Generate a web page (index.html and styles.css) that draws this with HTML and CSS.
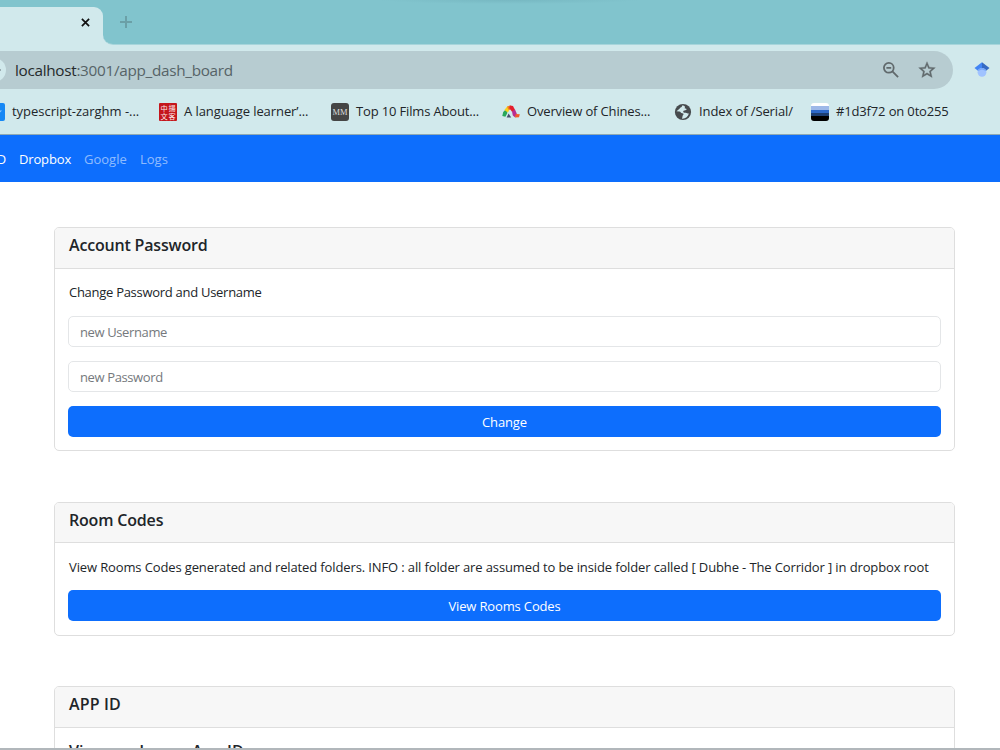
FILE: index.html
```html
<!DOCTYPE html>
<html lang="en">
<head>
    <meta charset="UTF-8">
    <title>App Dashboard</title>
    <link rel="stylesheet" href="styles.css">
</head>
<body>
<div class="browser">
    <div class="tab-strip">
        <div class="tab">
            <svg class="tab-close" viewBox="0 0 10 10"><path d="M1 1l8 8M9 1l-8 8"/></svg>
        </div>
        <div class="strip-rest">
            <svg class="new-tab" viewBox="0 0 12 12"><path d="M6 0v12M0 6h12"/></svg>
        </div>
    </div>
    <div class="toolbar">
        <div class="address-bar">
            <span class="site-info"></span>
            <div class="url"><span class="host">localhost</span>:3001/app_dash_board</div>
            <svg class="zoom-icon" viewBox="0 0 16 16"><circle cx="5.8" cy="5.8" r="4.9"/><path d="M9.4 9.4l5.7 5.7M3.4 5.8h4.8"/></svg>
            <svg class="star-icon" viewBox="0 0 24 24"><path d="M22 9.24l-7.19-.62L12 2 9.19 8.63 2 9.24l5.46 4.73L5.82 21 12 17.27 18.18 21l-1.63-7.03L22 9.24zM12 15.4l-3.76 2.27 1-4.28-3.32-2.88 4.38-.38L12 6.1l1.71 4.04 4.38.38-3.32 2.88 1 4.28L12 15.4z"/></svg>
        </div>
        <svg class="scholar-icon" viewBox="0 0 16 16">
            <path fill="#4285f4" d="M0.5 6L8 0.3V12z"/>
            <path fill="#356ac3" d="M15.5 6L8 0.3V12z"/>
            <circle cx="8" cy="10.3" r="4.4" fill="#a0c3ff"/>
            <path fill="#76a7fa" d="M3.8 9a4.5 4.5 0 0 1 8.4 0L8 7.6z"/>
        </svg>
    </div>
    <div class="bookmarks">
        <a class="bookmark bm-typescript">
            <svg viewBox="0 0 18 18"><rect width="18" height="18" rx="2" fill="#1688f5"/><path d="M9 7.5h6l-3 3z" fill="#8cc7ff"/></svg>
            <span>typescript-zarghm -...</span>
        </a>
        <a class="bookmark bm-language">
            <svg viewBox="0 0 18 18">
                <rect width="18" height="18" rx="1" fill="#c4161c"/>
                <g class="hanzi"><text x="1.4" y="8">中</text><text x="9.4" y="8">揚</text><text x="1.4" y="16">文</text><text x="9.4" y="16">客</text></g>
            </svg>
            <span>A language learner’...</span>
        </a>
        <a class="bookmark bm-films">
            <svg viewBox="0 0 18 18"><rect width="18" height="18" rx="3" fill="#454545"/><text class="mm" x="9" y="12.2" textLength="15" lengthAdjust="spacingAndGlyphs">MM</text></svg>
            <span>Top 10 Films About...</span>
        </a>
        <a class="bookmark bm-chinese">
            <svg viewBox="0 0 18 18">
                <path fill="#28a85b" d="M0.3 13L1.2 9l3-3 1.2 4-2 3.8z"/>
                <path fill="#f6d21f" d="M2.4 7l3-3.8 3.4.8L6 9.5z"/>
                <path fill="#f47b20" d="M5.2 3.4L8 2.4l2 .8-2 3.8-2-.8z"/>
                <path fill="#e41f2d" d="M8 2.6l3 .3 2.2 4.3-3 1.8L7.2 5z"/>
                <path fill="#b92c91" d="M10 8.2l3-1.6 1.8 4.2-1.6 3.6-2.4-2z"/>
                <path fill="#f15a29" d="M13 14.5l.8-3.4 4 .1-.8 3z"/>
                <path fill="#46506a" d="M4.6 14.4l2-4 2.6 4z"/>
            </svg>
            <span>Overview of Chines...</span>
        </a>
        <a class="bookmark bm-index">
            <svg viewBox="0 0 18 18">
                <circle cx="9" cy="9" r="8.1" fill="#474b4e"/>
                <path fill="#d1e9ec" d="M8.8 2.3c-1.2.6-.6 2-2 2.2-1.2.2-1 1.6-2.2 2L2.5 8.3l2.9.2c1.5.1 1.2 1.7 2.8 1.7 1.5 0 1.8 1.2.5 2.3l-.7 3.2c3.6.2 6-2.1 6.900-5.1-1.3.2-2-1-3.5-.8-1.3.1-2.3-.2-2.2-1.3.1-1.3 2-.7 3.2-1.700.8-.8-.6-1.5-1.8-1.6.6-1.1 1-1.6-1.800-2.900z"/>
            </svg>
            <span>Index of /Serial/</span>
        </a>
        <a class="bookmark bm-color">
            <span class="stripes"></span>
            <span>#1d3f72 on 0to255</span>
        </a>
    </div>
</div>

<nav class="navbar">
    <a class="nav-link active nav-cut">APP ID</a>
    <a class="nav-link active nav-dropbox">Dropbox</a>
    <a class="nav-link nav-google">Google</a>
    <a class="nav-link nav-logs">Logs</a>
</nav>

<main class="container">
    <section class="card">
        <div class="card-header"><h5>Account Password</h5></div>
        <div class="card-body">
            <p class="text-account">Change Password and Username</p>
            <input class="form-control" type="text" placeholder="new Username">
            <input class="form-control" type="password" placeholder="new Password">
            <button class="btn">Change</button>
        </div>
    </section>
    <section class="card">
        <div class="card-header"><h5>Room Codes</h5></div>
        <div class="card-body">
            <p class="text-rooms">View Rooms Codes generated and related folders. INFO : all folder are assumed to be inside folder called [ Dubhe - The Corridor ] in dropbox root</p>
            <button class="btn">View Rooms Codes</button>
        </div>
    </section>
    <section class="card">
        <div class="card-header"><h5 class="title-app">APP ID</h5></div>
        <div class="card-body">
            <h6>View or change App ID</h6>
        </div>
    </section>
</main>
<div class="window-edge"></div>
</body>
</html>
```
FILE: styles.css
```css
* {
    box-sizing: border-box;
}
body {
    margin: 0;
    height: 750px;
    display: flex;
    flex-direction: column;
    overflow: hidden;
    background-color: #fff;
    color: #212529;
    font-family: "Open Sans", "Noto Sans", sans-serif;
    font-size: 13px;
    letter-spacing: -0.15px;
}
svg {
    display: block;
    flex: none;
}

/* browser window */
.browser {
    flex: none;
    height: 135px;
    background-color: #d1e9ec;
    border-bottom: 1px solid #8fa9b3;
}
.tab-strip {
    display: flex;
    height: 45px;
    background: linear-gradient(#d1e9ec, #d1e9ec) 0 100% / 120px 20px no-repeat, #81c4cd;
}
.tab {
    width: 103px;
    margin-top: 7px;
    padding: 11px 0 0 81px;
    background-color: #d1e9ec;
    border-top-right-radius: 9px;
}
.tab-close {
    width: 9px;
    height: 9px;
    stroke: #111;
    stroke-width: 1.9;
}
.strip-rest {
    flex: 1;
    padding: 16px 0 0 17px;
    background: radial-gradient(ellipse 130px 4px at 407px 0, #77b8c2, #81c4cd);
    border-bottom: 1px solid #a7d5db;
    border-bottom-left-radius: 10px;
}
.new-tab {
    width: 12px;
    height: 12px;
    stroke: #6ba0a7;
    stroke-width: 2;
}
.toolbar {
    display: flex;
    align-items: center;
    height: 50px;
    gap: 21px;
}
.address-bar {
    display: flex;
    align-items: center;
    width: 953px;
    height: 38px;
    background-color: #b7ccd1;
    border-radius: 0 19px 19px 0;
}
.site-info {
    width: 24px;
    height: 24px;
    margin: 0 9px 0 -18px;
    background: linear-gradient(#9aabb0, #9aabb0) 18px 50% / 1px 2px no-repeat, #d1e9ec;
    border-radius: 50%;
}
.url {
    flex: 1;
    color: #566367;
    font-size: 15.3px;
    letter-spacing: -0.3px;
}
.host {
    color: #25292b;
}
.zoom-icon {
    width: 16px;
    height: 16px;
    margin-right: 18px;
    fill: none;
    stroke: #60696c;
    stroke-width: 1.8;
}
.star-icon {
    width: 20px;
    height: 20px;
    margin-right: 16.5px;
    fill: #60696c;
    stroke: #60696c;
    stroke-width: 0.4;
}
.scholar-icon {
    width: 16px;
    height: 16px;
}
.bookmarks {
    display: flex;
    height: 33px;
    align-items: center;
}
.bookmark {
    display: flex;
    flex: none;
    align-items: center;
    gap: 7px;
    line-height: 18px;
    white-space: nowrap;
}
.bookmark span:last-child {
    padding-bottom: 2px;
}
.bookmark svg {
    width: 18px;
    height: 18px;
}
.bm-typescript {
    width: 172px;
    margin-left: -13px;
    letter-spacing: -0.02px;
}
.bm-language {
    width: 172px;
    letter-spacing: -0.08px;
}
.bm-films {
    width: 171px;
}
.bm-chinese {
    width: 172px;
}
.bm-index {
    width: 137px;
    letter-spacing: -0.1px;
}
.hanzi {
    fill: #fbe8e8;
    font: 7.2px "Noto Sans CJK TC", sans-serif;
    letter-spacing: 0;
}
.mm {
    fill: #ddd;
    font: 9px "Liberation Serif", serif;
    letter-spacing: 0;
    text-anchor: middle;
}
.stripes {
    width: 18px;
    height: 18px;
    border-radius: 3px;
    background: linear-gradient(#fff 0 3px, #9db8e8 3px 7px, #2d69c9 7px 10px, #1d3f72 10px 13px, #000 13px);
}

/* page */
.navbar {
    display: flex;
    flex: none;
    align-items: center;
    height: 47px;
    background-color: #0d6efd;
}
.nav-link {
    flex: none;
    color: rgba(255, 255, 255, 0.55);
}
.nav-link.active {
    color: #fff;
}
.nav-cut {
    display: flex;
    justify-content: flex-end;
    width: 6px;
    margin-right: 13px;
    white-space: nowrap;
}
.nav-dropbox {
    width: 65px;
}
.nav-google {
    width: 56px;
    letter-spacing: 0;
}
.nav-logs {
    letter-spacing: 0;
}
.container {
    flex: 1;
    min-height: 0;
    padding: 45.4px 45px 0 54px;
    overflow: hidden;
}
.card {
    margin-bottom: 50.4px;
    border: 1px solid #dedede;
    border-radius: 5px;
}
.card-header {
    height: 40.6px;
    padding: 6px 14px;
    background-color: #f7f7f7;
    border-bottom: 1px solid #dedede;
    border-radius: 4px 4px 0 0;
}
h5 {
    margin: 0;
    font-size: 16px;
    font-weight: 600;
    line-height: 22px;
    letter-spacing: -0.18px;
}
.title-app {
    letter-spacing: 0.15px;
}
h6 {
    margin: 0 0 0 1px;
    font-size: 16px;
    font-weight: 600;
    line-height: 20px;
    letter-spacing: 0.1px;
}
.card-body {
    padding: 13.3px 13px;
}
.card-body p {
    margin: 0 0 12px 1px;
    line-height: 21.4px;
    white-space: nowrap;
}
.text-account {
    letter-spacing: -0.28px;
}
.text-rooms {
    letter-spacing: -0.125px;
}
.form-control {
    display: block;
    width: 100%;
    height: 31.4px;
    margin-bottom: 13.6px;
    padding: 1px 11px 0;
    border: 1px solid #e4e6e8;
    border-radius: 5px;
    font: inherit;
    letter-spacing: -0.38px;
}
.form-control::placeholder {
    color: #75797d;
}
.btn {
    display: block;
    width: 100%;
    height: 31.4px;
    padding: 1px 0 0;
    border: none;
    border-radius: 5px;
    background-color: #0d6efd;
    color: #fff;
    font: inherit;
    letter-spacing: inherit;
}
.window-edge {
    flex: none;
    height: 2px;
    background-color: #b1b7bb;
}
```
